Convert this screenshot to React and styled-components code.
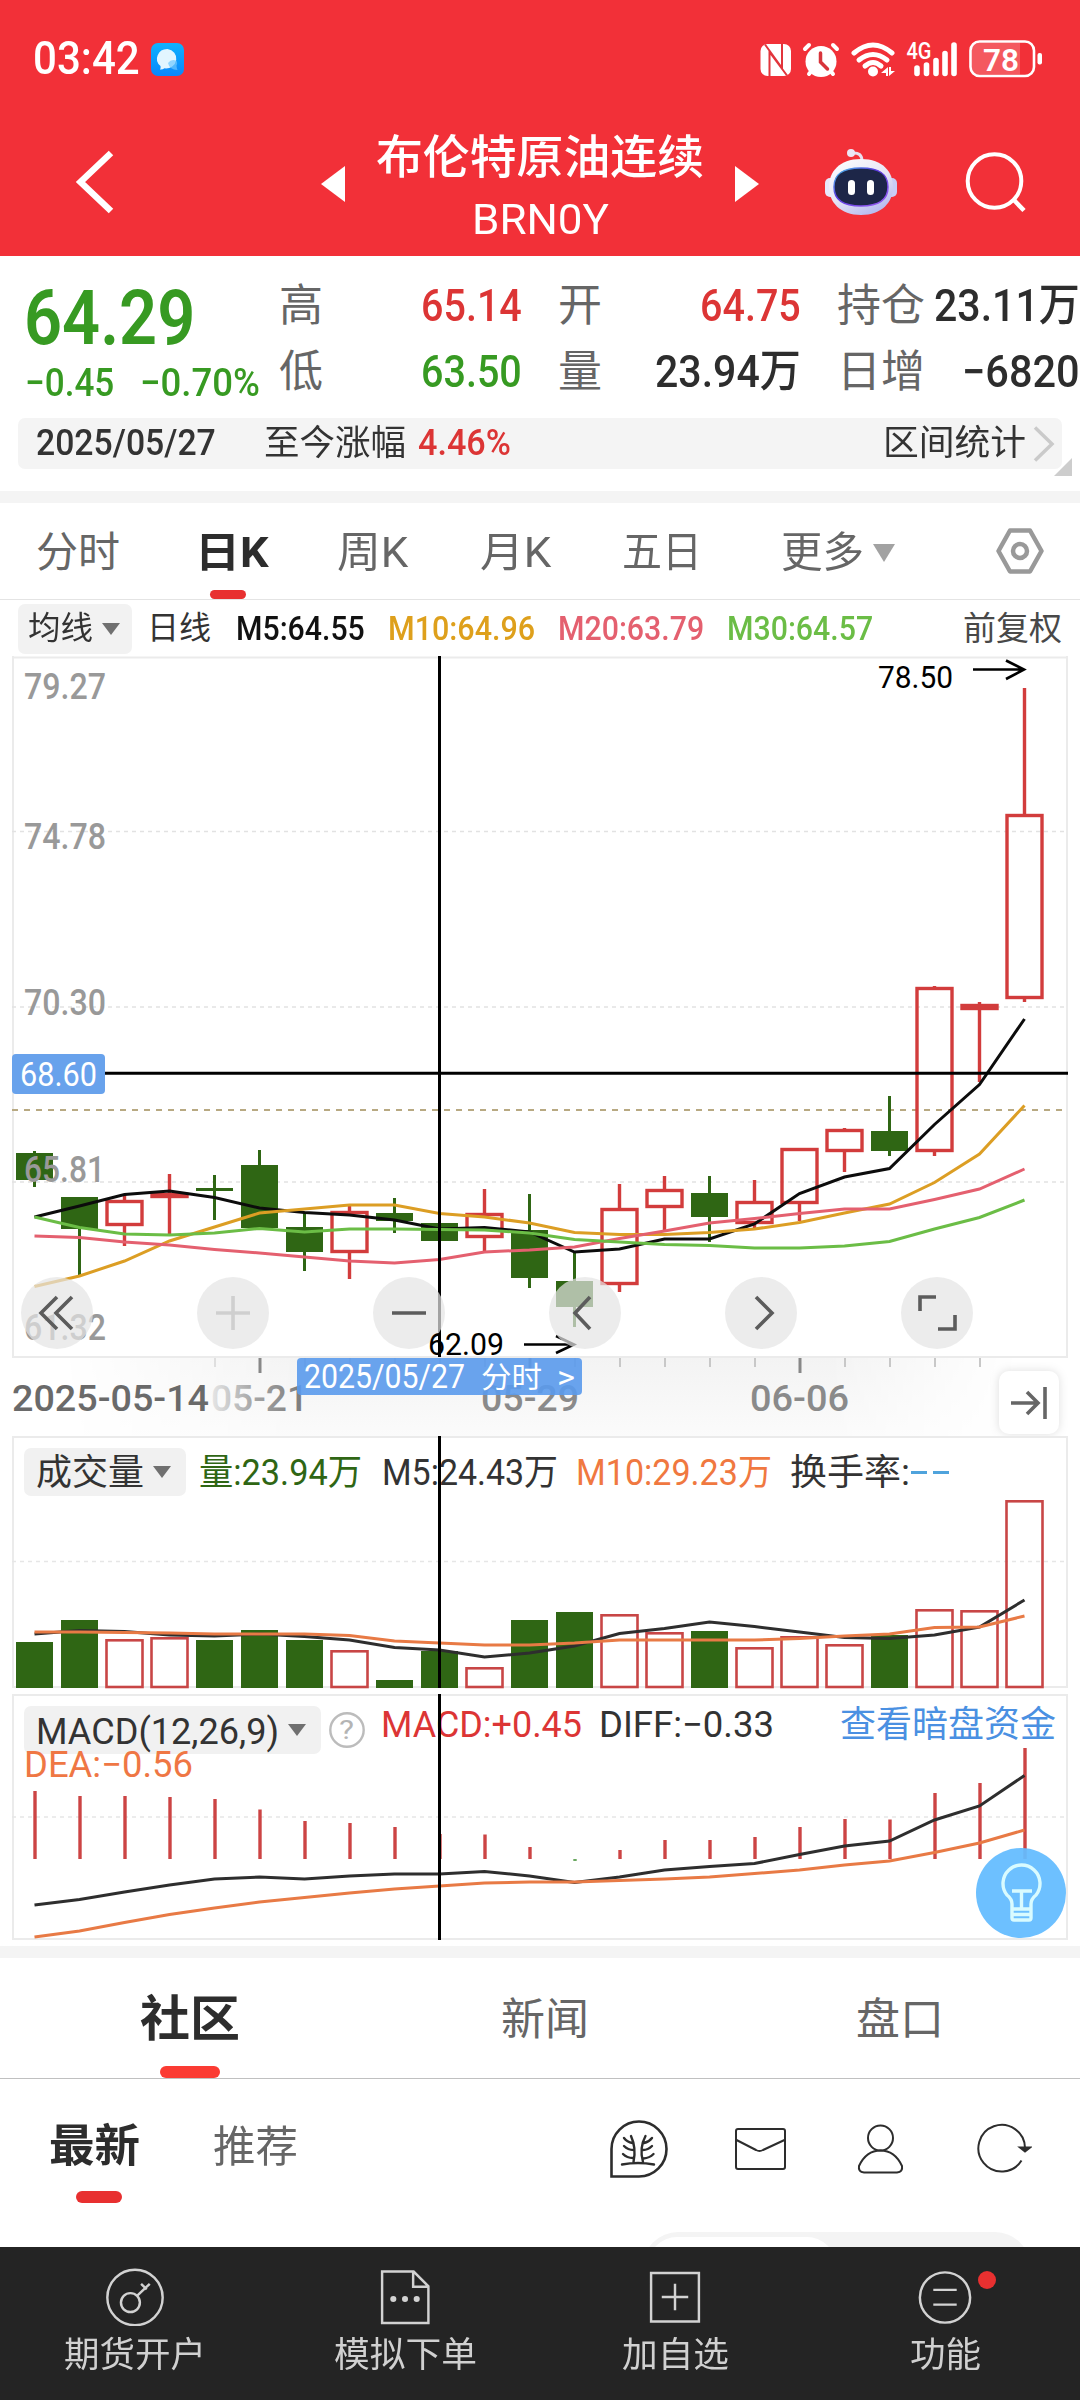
import React, { useLayoutEffect, useRef, useState } from "react";
import styled, { createGlobalStyle } from "styled-components";

const FONT = `Roboto, "Noto Sans CJK SC", sans-serif`;
const RED = "#dc3535";
const UP = "#d23c3c";
const GREEN = "#379a22";
const DOWN = "#2f6614";

/* text squeezed or stretched to a known width, like the condensed DIN digits */
const Fit = ({ w, size, children, ...rest }) => {
    const ref = useRef(null);
    const [scale, setScale] = useState(1);
    useLayoutEffect(() => {
        setScale(w / ref.current.offsetWidth);
    }, [w, children]);
    return (
        <FitBox $w={w} $size={size} {...rest}>
            <FitText ref={ref} style={{ transform: `scaleX(${scale})` }}>
                {children}
            </FitText>
        </FitBox>
    );
};

const Label = ({ x, y, w, size = 36, fill = "#999", weight = 400, children, ...rest }) => (
    <text
        x={x}
        y={y}
        fontFamily={FONT}
        fontSize={size}
        fontWeight={weight}
        fill={fill}
        textLength={w}
        lengthAdjust="spacingAndGlyphs"
        {...rest}>
        {children}
    </text>
);

const cx = (i) => 34.5 + i * 45;
const toPoints = (ys) => ys.map((y, i) => `${cx(i)},${y}`).join(" ");

const Line = ({ ys, color, width = 3 }) => (
    <polyline points={toPoints(ys)} fill="none" stroke={color} strokeWidth={width} />
);

// [up, body top, body bottom, wick top, wick bottom]
const candles = [
    [0, 1153, 1180, 1151, 1187],
    [0, 1197, 1229, 1197, 1275],
    [1, 1200, 1226, 1195, 1246],
    [1, 1193, 1198, 1174, 1234],
    [0, 1188, 1191, 1175, 1220],
    [0, 1165, 1228, 1150, 1228],
    [0, 1227, 1252, 1213, 1271],
    [1, 1211, 1253, 1206, 1279],
    [0, 1213, 1221, 1198, 1233],
    [0, 1223, 1241, 1223, 1241],
    [1, 1213, 1238, 1189, 1252],
    [0, 1230, 1278, 1194, 1288],
    [0, 1281, 1307, 1252, 1327],
    [1, 1208, 1285, 1184, 1292],
    [1, 1189, 1208, 1176, 1231],
    [0, 1193, 1217, 1176, 1242],
    [1, 1201, 1224, 1180, 1228],
    [1, 1148, 1204, 1148, 1221],
    [1, 1129, 1152, 1128, 1172],
    [0, 1131, 1151, 1096, 1156],
    [1, 987, 1152, 986, 1156],
    [1, 1004, 1010, 1002, 1082],
    [1, 814, 999, 688, 1002],
];

const ma5 = [1217, 1206, 1194.5, 1191, 1197.5, 1208, 1212.5, 1215, 1220, 1229, 1227.5, 1232, 1252, 1249, 1239, 1239, 1224, 1193.5, 1177, 1168.5, 1124.5, 1084.5, 1019];
const ma10 = [1286.5, 1276, 1261, 1241, 1227, 1213, 1209, 1205, 1205, 1213.5, 1217, 1223, 1232.5, 1234.5, 1234.5, 1232.5, 1229, 1222.5, 1213, 1204, 1182.5, 1154, 1105.5];
const ma20 = [1236, 1237.5, 1242, 1245, 1249.5, 1253, 1257, 1261, 1263, 1259.5, 1252, 1250, 1247, 1238.5, 1231, 1223, 1218.5, 1213.5, 1209, 1209, 1199.5, 1189, 1169];
const ma30 = [1217, 1227.5, 1234, 1235, 1233, 1228.5, 1232, 1229, 1229, 1229.5, 1230, 1233, 1239.5, 1242, 1244.5, 1245.5, 1248, 1248, 1246, 1241.5, 1229, 1217.5, 1200];

const volumes = [1642, 1620, 1639, 1637, 1640, 1630, 1640, 1650, 1680, 1651, 1667, 1620, 1612, 1614, 1632, 1631, 1647, 1636, 1644, 1635, 1609, 1610, 1500];
const volUp = [0, 0, 1, 1, 0, 0, 0, 1, 0, 0, 1, 0, 0, 1, 1, 0, 1, 1, 1, 0, 1, 1, 1];
const vol5 = [1634, 1630.5, 1631.5, 1635, 1636, 1634, 1636.5, 1640, 1647.5, 1650, 1657, 1653, 1646, 1633.5, 1628.5, 1622, 1626.5, 1632, 1637.5, 1638.5, 1635, 1627, 1600];
const vol10 = [1632, 1632, 1632.5, 1633, 1634, 1634, 1634, 1635.5, 1641, 1643, 1645, 1645, 1643, 1640, 1640, 1640, 1640, 1638.5, 1636, 1634, 1627.5, 1627, 1616];

const macd = [1791, 1796, 1796, 1797, 1799, 1809.5, 1821, 1823, 1827, 1834, 1834.5, 1847, 1861, 1850, 1840, 1840, 1837, 1827, 1819, 1819.5, 1793, 1783, 1748];
const diff = [1905, 1899.5, 1892, 1885, 1879, 1877, 1879, 1876, 1874, 1874, 1871.5, 1876, 1882.5, 1877, 1870, 1866.5, 1863.5, 1854.5, 1846, 1841, 1820, 1806, 1775.5];
const dea = [1937, 1931, 1922.5, 1914.5, 1908, 1902, 1897.5, 1893, 1889, 1886, 1883, 1882, 1882, 1880.5, 1879, 1877, 1873.5, 1870, 1865, 1861, 1852.5, 1843, 1830];

const tools = [
    { x: 57, d: "M57 1297L41 1313L57 1329M72 1297L56 1313L72 1329" },
    { x: 233, d: "M216 1313H250M233 1296V1330", off: true },
    { x: 409, d: "M392 1313H426" },
    { x: 585, d: "M590 1297L575 1313L590 1329" },
    { x: 761, d: "M756 1297L772 1313L756 1329" },
    { x: 937, d: "M920 1311V1297H936M955 1315V1329H938" },
];

const StatusIcons = () => (
    <svg width="290" height="44" viewBox="756 36 290 44">
        <rect x="760.500" y="43" width="30.500" height="32" rx="7" fill="#fff" />
        <path fill="none" stroke="#e2343b" strokeWidth="2" d="M769.500 76V51L787 74.500M782 42V67L765 43.500" />
        <circle cx="821" cy="60.500" r="15.500" fill="#fff" />
        <path stroke="#fff" strokeWidth="4" strokeLinecap="round" d="M805 48l4-4M837 48l-4-4M809 73l4-5M833 73l-4-5" />
        <path d="M820.500 52v9l7 7" fill="none" stroke="#d8343b" strokeWidth="3.500" strokeLinecap="round" />
        <g fill="none" stroke="#fff" strokeWidth="5" strokeLinecap="round">
            <path d="M854 52q19-16 38 0" />
            <path d="M859 59q14-11 28 0" />
            <path d="M865 65q8-7 16 0" />
        </g>
        <circle cx="873" cy="70.500" r="5" fill="#fff" />
        <path fill="#fff" d="M888 66v9h-2v-3h-5zM889 66v9l6-5h-4v-4z" />
        <Label x={906.5} y={57.5} w={25} size={23} weight={500} fill="#fff">4G</Label>
        <g stroke="#fff" strokeWidth="5.600" strokeLinecap="round">
            <path d="M917 67v5.500M926.500 64v8.500M936 59.500v13M945 52.500v20M954 44v28.500" />
        </g>
        <rect x="970.500" y="40.500" width="63.500" height="34.500" rx="9" fill="none" stroke="#fff" strokeWidth="2.600" />
        <path d="M978 42h42v31.500h-42q-6 0-6-6v-19.500q0-6 6-6z" fill="#fff" opacity=".2" />
        <rect x="1037.500" y="52" width="4.500" height="11.500" rx="2" fill="#fff" />
        <Label x={983} y={69.5} w={36} size={32} weight={600} fill="#fff">78</Label>
    </svg>
);

const Robot = () => (
    <svg width="74" height="68" viewBox="824 147 74 68">
        <defs>
            <linearGradient id="shell" x1="0" y1="0" x2=".6" y2="1">
                <stop offset="0" stopColor="#ffffff" />
                <stop offset=".6" stopColor="#e6e4f4" />
                <stop offset="1" stopColor="#b9bdf0" />
            </linearGradient>
            <linearGradient id="rim" x1="0" y1="0" x2="1" y2="1">
                <stop offset="0" stopColor="#48c8e8" />
                <stop offset=".4" stopColor="#5a3be0" />
                <stop offset="1" stopColor="#9a5cf0" />
            </linearGradient>
        </defs>
        <path d="M852 152q10-1 10 8" fill="none" stroke="#e8e0f0" strokeWidth="3" />
        <circle cx="851" cy="152" r="4" fill="#ece6f6" />
        <rect x="825" y="177" width="11" height="19" rx="5" fill="#e8e8fb" />
        <rect x="886" y="177" width="11" height="19" rx="5" fill="#c9cdf6" />
        <path d="M861 158c22 0 32 13 32 28s-11 28-32 28-32-13-32-28 10-28 32-28z" fill="url(#shell)" />
        <path d="M861 167c20 0 27 7 27 19s-8 19-27 19-27-7-27-19 7-19 27-19z" fill="#1d2648" stroke="url(#rim)" strokeWidth="1.500" />
        <rect x="848" y="179" width="7" height="15" rx="3.500" fill="#fff" />
        <rect x="867" y="179" width="7" height="15" rx="3.500" fill="#fff" />
    </svg>
);

const KChart = () => (
    <ChartSvg height="780" viewBox="0 656 1080 780">
        <defs>
            <linearGradient id="fadeX" x1="0" x2="1" y1="0" y2="0">
                <stop offset="0" stopColor="#fff" stopOpacity="0" />
                <stop offset=".25" stopColor="#fff" stopOpacity="1" />
                <stop offset=".8" stopColor="#fff" stopOpacity="1" />
                <stop offset="1" stopColor="#fff" stopOpacity="0" />
            </linearGradient>
            <linearGradient id="shade" x1="0" x2="0" y1="0" y2="1">
                <stop offset="0" stopColor="#f3f3f3" />
                <stop offset="1" stopColor="#fbfbfb" />
            </linearGradient>
            <linearGradient id="dateFade" gradientUnits="userSpaceOnUse" x1="210" x2="305" y1="0" y2="0">
                <stop offset="0" stopColor="#e8e8e8" />
                <stop offset=".45" stopColor="#a6a6a6" />
                <stop offset="1" stopColor="#7a7a7a" />
            </linearGradient>
            <mask id="edge">
                <rect x="60" y="1358" width="960" height="80" fill="url(#fadeX)" />
            </mask>
        </defs>
        <rect x="60" y="1358" width="960" height="80" fill="url(#shade)" mask="url(#edge)" />
        <path d="M13 656V1357.500M1067 656V1357.500M12 657.500H1068M12 1357H1068" stroke="#ebebeb" strokeWidth="2" />
        <path d="M12 831.500H1068M12 1007H1068M12 1182H1068" stroke="#e2e2e2" strokeWidth="1.300" strokeDasharray="4 4" />
        <path d="M12 1110H1068" stroke="#b8a982" strokeWidth="1.800" strokeDasharray="6 6" />
        {candles.map(([up, top, bottom, high, low], i) => (
            <g key={i}>
                {up ? (
                    <>
                        <path d={`M${cx(i)} ${high}V${top + 1}M${cx(i)} ${bottom - 1}V${low}`} stroke={UP} strokeWidth="3.400" />
                        <rect x={cx(i) - 17.5} y={top + 1.5} width="35" height={bottom - top - 3} fill="none" stroke={UP} strokeWidth="3.400" />
                    </>
                ) : (
                    <>
                        <path d={`M${cx(i)} ${high}V${low}`} stroke={DOWN} strokeWidth="3" />
                        <rect x={cx(i) - 18.500} y={top} width="37" height={bottom - top} fill={DOWN} />
                    </>
                )}
            </g>
        ))}
        <Line ys={ma5} color="#0c0c0c" />
        <Line ys={ma10} color="#dc9e24" />
        <Line ys={ma20} color="#e4606f" />
        <Line ys={ma30} color="#6bbd46" />
        <Label x={24} y={699} w={82} weight={500}>79.27</Label>
        <Label x={24} y={849} w={82} weight={500}>74.78</Label>
        <Label x={24} y={1015} w={82} weight={500}>70.30</Label>
        <Label x={24} y={1182} w={81} weight={500}>65.81</Label>
        <Label x={24} y={1340} w={82} weight={500}>61.32</Label>
        <Label x={878} y={688} w={75} size={32} fill="#000">78.50</Label>
        <path d="M973 669.500H1024M1006 660.500L1024 669.500L1006 679" fill="none" stroke="#000" strokeWidth="2.600" />
        <path d="M524 1344.500H574M556 1336L574 1344.500L556 1353" fill="none" stroke="#000" strokeWidth="2.600" />
        <path d="M12 1073.300H1068M439.500 656V1357" stroke="#000" strokeWidth="3" />
        <rect x="12" y="1054" width="93" height="40" rx="4" fill="#68a2ec" />
        <Label x={20} y={1085.5} w={77} size={33} fill="#fff">68.60</Label>
        {tools.map(({ x, d, off }) => (
            <g key={x}>
                <circle cx={x} cy="1313" r="36" fill="#e4e4e4" fillOpacity=".71" />
                <path d={d} fill="none" stroke={off ? "#cfcfcf" : "#5c5c5c"} strokeWidth="3.600" />
            </g>
        ))}
        <Label x={428} y={1354.5} w={76} size={32} fill="#000">62.09</Label>
        {candles.map((_, i) => {
            if (i < 4 || i > 21) return null;
            const long = i % 6 === 5;
            return (
                <path
                    key={i}
                    d={`M${cx(i) + 0.5} 1358V${long ? 1373 : 1367}`}
                    stroke={long ? "#888" : "#c8c8c8"}
                    strokeWidth={long ? 3 : 2}
                    opacity={i === 4 ? 0.5 : 1}
                />
            );
        })}
        <Label x={12} y={1411} w={197} weight={500} fill="#6a6a6a">2025-05-14</Label>
        <Label x={211} y={1411} w={97} weight={500} fill="url(#dateFade)">05-21</Label>
        <Label x={481} y={1411} w={98} weight={500} fill="#8a8a8a">05-29</Label>
        <Label x={750} y={1411} w={99} weight={500} fill="#8a8a8a">06-06</Label>
        <rect x="297" y="1358" width="285" height="37" rx="4" fill="#5a9aec" fillOpacity=".9" />
        <Label x={304} y={1388} w={161} size={33} fill="#fff">2025/05/27</Label>
        <Label x={481} y={1388} w={61} size={29} fill="#fff">分时</Label>
        <Label x={557} y={1388} w={18} size={32} fill="#fff">&gt;</Label>
        <g filter="drop-shadow(0 0 5px rgba(0,0,0,.13))">
            <rect x="999" y="1371" width="60" height="63" rx="10" fill="#fff" />
        </g>
        <path d="M1011 1403H1037M1027 1392L1038 1403L1027 1414M1045 1387V1419" fill="none" stroke="#666" strokeWidth="3.600" />
    </ChartSvg>
);

const VolumeChart = () => (
    <ChartSvg height="254" viewBox="0 1436 1080 254">
        <path d="M13 1436V1688M1067 1436V1688M12 1437H1068M12 1687H1068" stroke="#ebebeb" strokeWidth="2" />
        <path d="M12 1561.500H1068" stroke="#e6e6e6" strokeWidth="1.500" strokeDasharray="4 4" />
        {volumes.map((y, i) =>
            volUp[i] ? (
                <rect key={i} x={cx(i) - 18} y={y + 1.3} width="36" height={1687 - y - 1.3} fill="none" stroke="#c84646" strokeWidth="2.600" />
            ) : (
                <rect key={i} x={cx(i) - 18.5} y={y} width="37" height={1688 - y} fill={DOWN} />
            )
        )}
        <Line ys={vol5} color="#2e2e2e" />
        <Line ys={vol10} color="#e87a45" />
        <rect x="24" y="1448" width="162" height="48" rx="7" fill="#f1f1f1" />
        <Label x={36} y={1485} w={108} fill="#333">成交量</Label>
        <path d="M153 1466h18l-9 12z" fill="#707070" />
        <Label x={199} y={1485} w={163} fill={DOWN}>量:23.94万</Label>
        <Label x={382} y={1485} w={176} fill="#333">M5:24.43万</Label>
        <Label x={576} y={1485} w={196} fill="#f07840">M10:29.23万</Label>
        <Label x={790} y={1485} w={120} fill="#333">换手率:</Label>
        <path d="M911 1472.500h16M933 1472.500h16" stroke="#4fa3dc" strokeWidth="3" />
        <path d="M439.500 1436V1688" stroke="#000" strokeWidth="3" />
    </ChartSvg>
);

const MacdChart = () => (
    <ChartSvg height="246" viewBox="0 1694 1080 246">
        <path d="M13 1694V1940M1067 1694V1940M12 1695H1068M12 1939H1068" stroke="#ebebeb" strokeWidth="2" />
        <path d="M12 1817H1068" stroke="#e6e6e6" strokeWidth="1.500" strokeDasharray="4 4" />
        {macd.map((y, i) => (
            <path key={i} d={`M${cx(i) + 0.5} ${y}V1859`} stroke={y > 1859 ? "#6aa860" : "#cc4444"} strokeWidth="3.400" />
        ))}
        <Line ys={diff} color="#2e2e2e" />
        <Line ys={dea} color="#e87a45" />
        <rect x="24" y="1706" width="297" height="48" rx="7" fill="#f1f1f1" />
        <Label x={36} y={1744} w={243} fill="#333">MACD(12,26,9)</Label>
        <path d="M288 1724h18l-9 12z" fill="#707070" />
        <circle cx="347" cy="1730" r="16.700" fill="none" stroke="#bcbcbc" strokeWidth="2.400" />
        <Label x={339} y={1739} w={15} size={26} fill="#b4b4b4">?</Label>
        <Label x={381} y={1737} w={201} fill={RED}>MACD:+0.45</Label>
        <Label x={599} y={1737} w={175} fill="#333">DIFF:−0.33</Label>
        <Label x={840} y={1737} w={216} fill="#4a90e2">查看暗盘资金</Label>
        <Label x={24} y={1777} w={169} fill="#ef7744">DEA:−0.56</Label>
        <path d="M439.500 1694V1940" stroke="#000" strokeWidth="3" />
        <circle cx="1021" cy="1893" r="45" fill="#64bcff" fillOpacity=".94" />
        <path
            d="M1012 1904q0-5-5-9a18.500 18.500 0 1 1 29 0q-5 4-5 9v14q0 2-2 2h-15q-2 0-2-2zM1012 1909h19M1012 1914.500h19M1012 1891h20M1021.500 1891v18"
            fill="none"
            stroke="#d9fbff"
            strokeWidth="3.400"
            strokeLinejoin="round"
        />
    </ChartSvg>
);

const stats = [
    [["高", "65.14", 101, RED], ["低", "63.50", 101, GREEN]],
    [["开", "64.75", 101, RED], ["量", "23.94万", 146, "#2d2d2d"]],
    [["持仓", "23.11万", 146, "#2d2d2d"], ["日增", "−6820", 118, "#2d2d2d"]],
];

const periods = [
    ["分时", 84],
    ["日K", 74],
    ["周K", 71],
    ["月K", 71],
    ["五日", 80],
    ["更多", 83],
];

const navs = [
    { name: "期货开户", w: 142, icon: <><circle cx="28.500" cy="29" r="27.200" /><circle cx="24" cy="34" r="9.300" /><path d="M31 27L43 15.500M34.500 15.500l5.500 5.500" /></> },
    { name: "模拟下单", w: 143, icon: <><path d="M6 3.500H37L51.500 18V54H6zM36.500 3.500V18.500H51.500" /><g fill="#d2d2d2" stroke="none"><circle cx="17" cy="30.500" r="3" /><circle cx="28.500" cy="30.500" r="3" /><circle cx="40" cy="30.500" r="3" /></g></> },
    { name: "加自选", w: 107, icon: <path d="M5 5H52V52.500H5zM15.500 28.500H41.500M28.500 15.500V41.500" /> },
    { name: "功能", w: 71, dot: true, icon: <><circle cx="28.500" cy="29" r="24.700" /><path d="M17 21.500H40M17 36H40" /></> },
];

const App = () => (
    <>
        <GlobalStyle />
        <Screen>
            <RedArea>
                <StatusBar>
                    <Fit w={107} size={46} $weight={500}>03:42</Fit>
                    <AppBadge>
                        <svg width="33" height="33" viewBox="0 0 33 33">
                            <path d="M16.500 6a10.300 9.700 0 1 1-3 19.300q-2 1.500-4.500 1.200 1-1.500.5-3.500A10.300 9.700 0 0 1 16.500 6z" fill="#e2f5ff" />
                            <path d="M17 20q3-4 8-2.500 2 2 .5 5 0 2 1 4.500-8 0-9.500-7z" fill="#6cc8ff" opacity=".7" />
                        </svg>
                    </AppBadge>
                    <Grow />
                    <StatusIcons />
                </StatusBar>
                <TitleBar>
                    <svg width="44" height="68" viewBox="74 148 44 68">
                        <path d="M111 153L80.500 182L111 211" fill="none" stroke="#fff" strokeWidth="6.500" />
                    </svg>
                    <TitleGroup>
                        <Triangle $dir="left" />
                        <TitleText>
                            <Fit w={328} size={46} $h={64} $weight={500}>布伦特原油连续</Fit>
                            <Fit w={137} size={43} $h={60}>BRN0Y</Fit>
                        </TitleText>
                        <Triangle $dir="right" />
                    </TitleGroup>
                    <Robot />
                    <svg width="64" height="64" viewBox="964 152 64 64">
                        <circle cx="994.500" cy="183" r="26.800" fill="none" stroke="#fff" strokeWidth="4" />
                        <path d="M1013 201L1024 212.500" stroke="#fff" strokeWidth="4.500" />
                    </svg>
                </TitleBar>
            </RedArea>

            <Quote>
                <Price>
                    <Fit w={171} size={76} $h={80} $weight={600}>64.29</Fit>
                    <Change>
                        <Fit w={89} size={39} $h={50} $weight={500}>−0.45</Fit>
                        <Fit w={120} size={39} $h={50} $weight={500}>−0.70%</Fit>
                    </Change>
                </Price>
                {stats.map((col, i) => (
                    <StatCol key={i}>
                        {col.map(([name, value, w, color]) => (
                            <StatRow key={name}>
                                <Fit w={name.length * 44} size={44} $color="#666">{name}</Fit>
                                <Fit w={w} size={45} $color={color} $weight={500}>{value}</Fit>
                            </StatRow>
                        ))}
                    </StatCol>
                ))}
            </Quote>
            <RangeBar>
                <Fit w={180} size={36} $weight={500}>2025/05/27</Fit>
                <RangeLabel>
                    <Fit w={142} size={35}>至今涨幅</Fit>
                    <Fit w={93} size={36} $color={RED} $weight={500}>4.46%</Fit>
                </RangeLabel>
                <Grow />
                <Fit w={143} size={35}>区间统计</Fit>
                <svg width="36" height="38" viewBox="0 0 36 38">
                    <path d="M9 2.500L26 19L9 35.500" fill="none" stroke="#cacaca" strokeWidth="3.500" />
                </svg>
                <Corner />
            </RangeBar>
            <Band />

            <Periods>
                {periods.map(([name, w], i) => (
                    <Period key={name}>
                        <Row>
                            <Fit w={w} size={42} $h={74} $color={i === 1 ? "#2d2d2d" : "#666"} $weight={i === 1 ? 700 : 400}>
                                {name}
                            </Fit>
                            {name === "更多" && <MoreArrow />}
                        </Row>
                        {i === 1 && <PeriodMark />}
                    </Period>
                ))}
                <svg width="52" height="50" viewBox="994 526 52 50">
                    <path d="M1010 530.500H1030L1041.500 551L1030 571.500H1010L998.500 551Z" fill="none" stroke="#999" strokeWidth="4.500" strokeLinejoin="round" />
                    <circle cx="1020" cy="551" r="7" fill="none" stroke="#999" strokeWidth="4.500" />
                </svg>
            </Periods>

            <MaRow>
                <Pill>
                    <Fit w={65} size={32}>均线</Fit>
                    <SmallArrow />
                </Pill>
                <Fit w={64} size={32}>日线</Fit>
                <Fit w={129} size={34} $color="#111" $weight={500}>M5:64.55</Fit>
                <Fit w={147} size={34} $color="#dea01c" $weight={500}>M10:64.96</Fit>
                <Fit w={146} size={34} $color="#e4606f" $weight={500}>M20:63.79</Fit>
                <Fit w={146} size={34} $color="#6bbd46" $weight={500}>M30:64.57</Fit>
                <Grow />
                <Fit w={99} size={33} $color="#484848">前复权</Fit>
            </MaRow>
            <KChart />
            <VolumeChart />
            <Gap />
            <MacdChart />
            <Gap $h={6} />
            <Band />

            <Sections>
                <Section>
                    <Fit w={100} size={49} $h={92} $weight={700} $color="#2d2d2d">社区</Fit>
                    <SectionMark />
                </Section>
                <Section>
                    <Fit w={88} size={44} $h={92} $color="#666">新闻</Fit>
                </Section>
                <Section>
                    <Fit w={88} size={44} $h={92} $color="#666">盘口</Fit>
                </Section>
            </Sections>
            <Feed>
                <FeedTab>
                    <Fit w={91} size={45} $h={108} $weight={700} $color="#2d2d2d">最新</Fit>
                    <FeedMark />
                </FeedTab>
                <FeedTab>
                    <Fit w={85} size={43} $h={108} $color="#666">推荐</Fit>
                </FeedTab>
                <FeedIcons>
                    <svg width="60" height="62" viewBox="609 2118 60 62" fill="none" stroke="#2d2d2d" strokeWidth="2.600" strokeLinecap="round">
                        <path d="M611.500 2176.500V2149A27.500 27.500 0 1 1 639 2176.500Z" />
                        <path strokeWidth="2.400" d="M622 2164.500q16-3 32 0M633.500 2162q3-14-2.500-26M643 2162q-4-14 2.500-26M624 2138q3 4 8.500 5M624 2146q4 4 9.500 4M623 2154q4 4 10 4M652 2138q-3 4-8 5M652 2146q-4 4-9 4M653.500 2154q-4 4-10 4.500" />
                    </svg>
                    <svg width="54" height="46" viewBox="734 2126 54 46" fill="none" stroke="#2d2d2d" strokeWidth="2">
                        <rect x="736" y="2129" width="49" height="40" rx="2" />
                        <path d="M736.500 2140L756 2150q3.500 2 7 0L784.500 2140" />
                    </svg>
                    <svg width="48" height="52" viewBox="857 2123 48 52" fill="none" stroke="#2d2d2d" strokeWidth="2">
                        <circle cx="880.500" cy="2138" r="12.500" />
                        <path d="M880.500 2150.500c12 0 18 8 21.500 15.500q1 6-5 6.500h-33q-6-.5-5-6.500c3.500-7.500 9.500-15.500 21.500-15.500z" />
                    </svg>
                    <svg width="56" height="52" viewBox="976 2123 56 52" fill="none" stroke="#2d2d2d" strokeWidth="2">
                        <path d="M1021.500 2160.500A23.300 23.300 0 1 1 1025 2148" />
                        <path d="M1020 2147.500h10l-5 4z" fill="#2d2d2d" />
                    </svg>
                </FeedIcons>
            </Feed>
            <Peek>
                <SortSwitch>
                    <SortThumb />
                </SortSwitch>
            </Peek>

            <BottomNav>
                {navs.map(({ name, w, icon, dot }) => (
                    <NavItem key={name}>
                        <NavIcon>
                            <svg width="58" height="58" viewBox="0 0 57 57" fill="none" stroke="#d2d2d2" strokeWidth="2.400">
                                {icon}
                            </svg>
                            {dot && <Dot />}
                        </NavIcon>
                        <Fit w={w} size={35} $h={46} $color="#d0d0d0">{name}</Fit>
                    </NavItem>
                ))}
            </BottomNav>
        </Screen>
    </>
);

export default App;

const GlobalStyle = createGlobalStyle`
    body {
        margin: 0;
        background: #fff;
    }
    svg {
        display: block;
        flex: none;
    }
`;

const Screen = styled.div`
    width: 1080px;
    height: 2400px;
    overflow: hidden;
    background: #fff;
    color: #333;
    font-family: ${FONT};
    display: flex;
    flex-direction: column;
    > * {
        flex: none;
    }
`;

const FitBox = styled.div`
    flex: none;
    width: ${(props) => props.$w}px;
    font-size: ${(props) => props.$size}px;
    line-height: ${(props) => (props.$h ? `${props.$h}px` : "1.2")};
    font-weight: ${(props) => props.$weight || 400};
    color: ${(props) => props.$color || "inherit"};
`;

const FitText = styled.span`
    display: inline-block;
    white-space: nowrap;
    transform-origin: 0 50%;
`;

const Grow = styled.div`
    flex: 1;
`;

const Row = styled.div`
    display: flex;
    align-items: center;
`;

const RedArea = styled.header`
    height: 256px;
    background: #f23038;
    color: #fff;
`;

const StatusBar = styled.div`
    display: flex;
    align-items: center;
    height: 118px;
    padding: 0 34px 0 33px;
`;

const AppBadge = styled.div`
    width: 33px;
    height: 33px;
    margin-left: 11px;
    border-radius: 7px;
    background: linear-gradient(#0fb2ff, #0a86fb);
`;

const TitleBar = styled.div`
    display: flex;
    align-items: center;
    height: 127px;
    padding: 0 52px 0 74px;
    > svg:last-child {
        margin-left: 66px;
    }
`;

const TitleGroup = styled.div`
    display: flex;
    align-items: center;
    width: 438px;
    justify-content: space-between;
    margin: 2px 65px 0 203px;
`;

const TitleText = styled.div`
    display: flex;
    flex-direction: column;
    align-items: center;
    padding-top: 8px;
`;

const Triangle = styled.i`
    border: 18px solid transparent;
    border-${(props) => props.$dir}-width: 0;
    border-${(props) => (props.$dir === "left" ? "right" : "left")}: 24px solid #fff;
    margin-top: 2px;
`;

const Quote = styled.section`
    display: flex;
    height: 162px;
    padding-left: 24px;
`;

const Price = styled.div`
    width: 255px;
    padding-top: 22px;
    color: ${GREEN};
`;

const Change = styled.div`
    display: flex;
    gap: 26px;
    margin-left: 1px;
`;

const StatCol = styled.div`
    display: flex;
    flex-direction: column;
    width: 243px;
    padding-top: 17px;
    & + & {
        margin-left: 36px;
    }
`;

const StatRow = styled.div`
    display: flex;
    justify-content: space-between;
    align-items: center;
    height: 66px;
`;

const RangeBar = styled.div`
    position: relative;
    display: flex;
    align-items: center;
    height: 51px;
    margin: 0 18px 22px;
    padding-left: 18px;
    border-radius: 7px;
    background: #f4f4f4;
`;

const RangeLabel = styled.div`
    display: flex;
    align-items: center;
    gap: 12px;
    margin-left: 48px;
`;

const Corner = styled.i`
    position: absolute;
    right: -10px;
    bottom: -7px;
    border-style: solid;
    border-width: 0 0 18px 18px;
    border-color: transparent transparent #cdcdcd;
`;

const Band = styled.div`
    height: 12px;
    background: #f4f4f4;
`;

const Gap = styled.div`
    height: ${(props) => props.$h || 4}px;
`;

const Periods = styled.nav`
    display: grid;
    grid-template-columns: 159px 142px 143px 142px 159px 213px auto;
    height: 96px;
    padding-left: 36px;
    border-bottom: 1px solid #e4e4e4;
    > svg {
        margin-top: 23px;
    }
`;

const Period = styled.div`
    padding-top: 13px;
`;

const PeriodMark = styled.i`
    display: block;
    width: 36px;
    height: 9px;
    margin-left: 15px;
    border-radius: 5px;
    background: #e83030;
`;

const MoreArrow = styled.i`
    margin: 0 0 0 9px;
    border: 11px solid transparent;
    border-bottom-width: 0;
    border-top: 18px solid #a2a2a2;
`;

const MaRow = styled.div`
    display: flex;
    align-items: center;
    height: 55px;
    padding: 1px 18px 0;
    > div:nth-child(2) {
        margin-left: 15px;
    }
    > div:nth-child(3) {
        margin-left: 25px;
    }
    > div:nth-child(n + 4):nth-child(-n + 6) {
        margin-left: 23px;
    }
`;

const Pill = styled.div`
    display: flex;
    align-items: center;
    width: 104px;
    height: 50px;
    padding-left: 10px;
    border-radius: 7px;
    background: #f2f2f2;
`;

const SmallArrow = styled.i`
    margin-left: 9px;
    border: 9px solid transparent;
    border-bottom-width: 0;
    border-top: 12px solid #707070;
`;

const ChartSvg = styled.svg`
    width: 1080px;
`;

const Sections = styled.nav`
    display: grid;
    grid-template-columns: 380px 330px 380px;
    height: 120px;
    border-bottom: 1px solid #c0c0c0;
`;

const Section = styled.div`
    display: flex;
    flex-direction: column;
    align-items: center;
    padding-top: 16px;
`;

const SectionMark = styled.i`
    width: 60px;
    height: 12px;
    border-radius: 6px;
    background: #fb3b33;
`;

const Feed = styled.div`
    display: flex;
    height: 139px;
    padding: 14px 48px 0 49px;
`;

const FeedTab = styled.div`
    display: flex;
    flex-direction: column;
    align-items: center;
    & + & {
        margin-left: 73px;
    }
`;

const FeedMark = styled.i`
    width: 46px;
    height: 12px;
    margin: -10px 0 0 8px;
    border-radius: 6px;
    background: #e83030;
`;

const FeedIcons = styled.div`
    display: flex;
    align-items: center;
    height: 112px;
    margin-left: auto;
    > :nth-child(2) {
        margin-left: 65px;
    }
    > :nth-child(3) {
        margin-left: 69px;
    }
    > :nth-child(4) {
        margin-left: 71px;
    }
`;

const Peek = styled.div`
    height: 15px;
    overflow: hidden;
`;

const SortSwitch = styled.div`
    width: 377px;
    height: 60px;
    margin-left: 643px;
    padding: 5px;
    border-radius: 35px;
    background: #f4f4f4;
`;

const SortThumb = styled.div`
    width: 188px;
    height: 58px;
    border-radius: 29px;
    background: #fff;
`;

const BottomNav = styled.nav`
    display: grid;
    grid-template-columns: repeat(4, 1fr);
    height: 153px;
    background: #242424;
`;

const NavItem = styled.div`
    display: flex;
    flex-direction: column;
    align-items: center;
    padding-top: 21px;
`;

const NavIcon = styled.div`
    position: relative;
    margin-bottom: 7px;
`;

const Dot = styled.i`
    position: absolute;
    right: -22px;
    top: 3px;
    width: 18px;
    height: 18px;
    border-radius: 50%;
    background: #e83030;
`;
